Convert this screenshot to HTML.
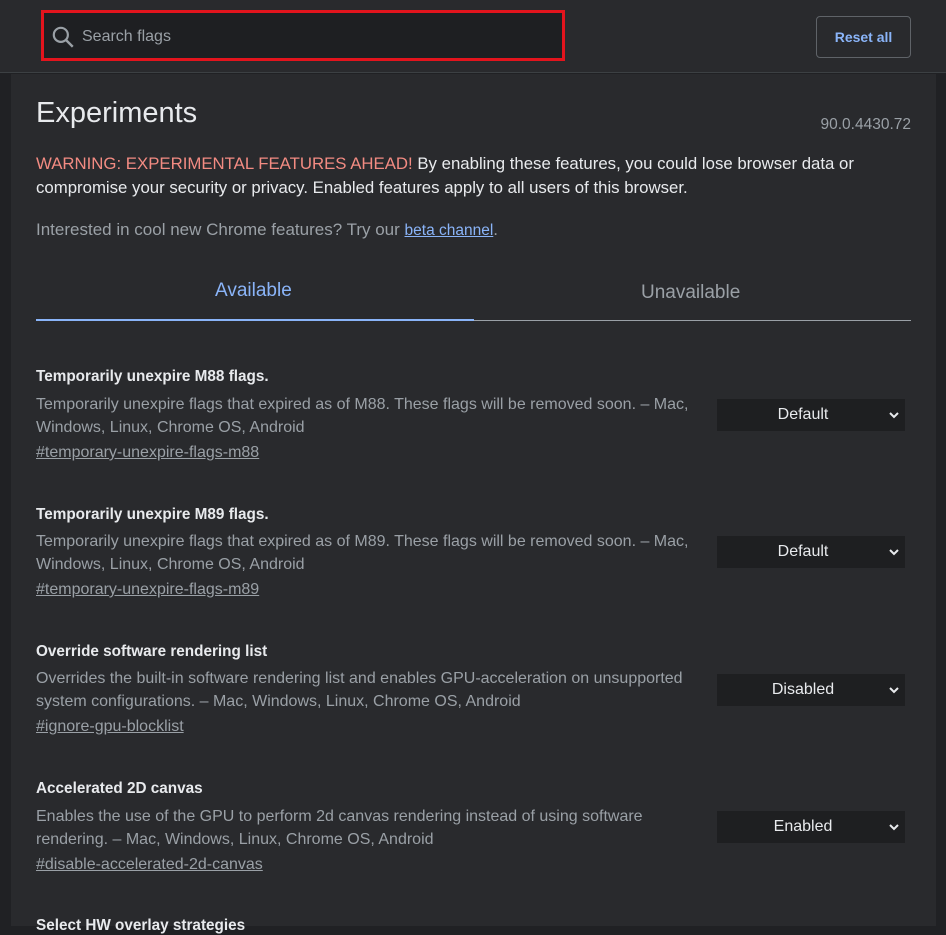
<!DOCTYPE html>
<html><head><style>
*{margin:0;padding:0;box-sizing:border-box}
body{width:946px;height:926px;overflow:hidden;background:#202124;font-family:"Liberation Sans",sans-serif;position:relative;color:#e8eaed}
.hdr{position:absolute;left:0;top:0;width:946px;height:73px;background:#292a2d;border-bottom:1px solid #3c4043}
.search{position:absolute;left:41px;top:10px;width:524px;height:51px;background:#1e1f22;border:3px solid #e3141d}
.search span{position:absolute;left:38px;top:15px;font-size:16px;color:#9aa0a6}
.reset{position:absolute;left:816px;top:16px;width:95px;height:42px;border:1px solid #5f6368;border-radius:4px;color:#8ab4f8;font-size:14px;font-weight:bold;text-align:center;line-height:40px}
.panel{position:absolute;left:11px;top:74px;width:925px;height:852px;background:#292a2d}
.a{position:absolute;white-space:nowrap}
.t{font-size:15.3px;font-weight:bold;color:#e8eaed}
.d{font-size:16px;color:#9aa0a6;line-height:23px}
.l{font-size:16px;color:#9aa0a6;text-decoration:underline}
.sel{position:absolute;left:717px;width:188px;height:32px;background:#1e1f21;color:#e8eaed;font-size:16px;text-align:center;line-height:32px;padding-right:16px}
.sel svg{position:absolute;right:6px;top:12px}
</style></head><body>
<div class="hdr">
<div class="search"><svg width="26" height="26" viewBox="0 0 24 24" style="position:absolute;left:6px;top:11px"><circle cx="10" cy="10" r="6.5" stroke="#9aa0a6" stroke-width="2" fill="none"/><path d="M15 15l6 6" stroke="#9aa0a6" stroke-width="2.2"/></svg><span>Search flags</span></div>
<div class="reset">Reset all</div>
</div>
<div class="panel"></div>
<div class="a" style="left:36px;top:97px;font-size:29px;color:#e8eaed">Experiments</div>
<div class="a" style="right:35px;top:116px;font-size:15.5px;color:#9aa0a6">90.0.4430.72</div>
<div class="a" style="left:36px;top:152px;font-size:16.8px;line-height:24px;color:#e8eaed"><span style="color:#f28b82">WARNING: EXPERIMENTAL FEATURES AHEAD!</span> By enabling these features, you could lose browser data or<br>compromise your security or privacy. Enabled features apply to all users of this browser.</div>
<div class="a" style="left:36px;top:220px;font-size:17px;color:#9aa0a6">Interested in cool new Chrome features? Try our <span style="color:#8ab4f8;text-decoration:underline;font-size:15.5px">beta channel</span>.</div>
<div class="a" style="left:215px;top:280px;font-size:19px;color:#8ab4f8">Available</div>
<div class="a" style="left:641px;top:282px;font-size:19px;color:#9aa0a6">Unavailable</div>
<div class="a" style="left:36px;top:320px;width:875px;height:1px;background:#9aa0a6"></div>
<div class="a" style="left:36px;top:319px;width:438px;height:2px;background:#8ab4f8"></div>

<div class="a t" style="left:36px;top:368px">Temporarily unexpire M88 flags.</div>
<div class="a d" style="left:36px;top:393px">Temporarily unexpire flags that expired as of M88. These flags will be removed soon. – Mac,<br>Windows, Linux, Chrome OS, Android</div>
<div class="a l" style="left:36px;top:444px">#temporary-unexpire-flags-m88</div>
<div class="sel" style="top:399px">Default<svg width="10" height="8" viewBox="0 0 10 8"><path d="M1 2l4 4 4-4" stroke="#e8eaed" stroke-width="2" fill="none"/></svg></div>

<div class="a t" style="left:36px;top:506px">Temporarily unexpire M89 flags.</div>
<div class="a d" style="left:36px;top:530px">Temporarily unexpire flags that expired as of M89. These flags will be removed soon. – Mac,<br>Windows, Linux, Chrome OS, Android</div>
<div class="a l" style="left:36px;top:581px">#temporary-unexpire-flags-m89</div>
<div class="sel" style="top:536px">Default<svg width="10" height="8" viewBox="0 0 10 8"><path d="M1 2l4 4 4-4" stroke="#e8eaed" stroke-width="2" fill="none"/></svg></div>

<div class="a t" style="left:36px;top:643px">Override software rendering list</div>
<div class="a d" style="left:36px;top:667px">Overrides the built-in software rendering list and enables GPU-acceleration on unsupported<br>system configurations. – Mac, Windows, Linux, Chrome OS, Android</div>
<div class="a l" style="left:36px;top:718px">#ignore-gpu-blocklist</div>
<div class="sel" style="top:674px">Disabled<svg width="10" height="8" viewBox="0 0 10 8"><path d="M1 2l4 4 4-4" stroke="#e8eaed" stroke-width="2" fill="none"/></svg></div>

<div class="a t" style="left:36px;top:780px">Accelerated 2D canvas</div>
<div class="a d" style="left:36px;top:805px">Enables the use of the GPU to perform 2d canvas rendering instead of using software<br>rendering. – Mac, Windows, Linux, Chrome OS, Android</div>
<div class="a l" style="left:36px;top:856px">#disable-accelerated-2d-canvas</div>
<div class="sel" style="top:811px">Enabled<svg width="10" height="8" viewBox="0 0 10 8"><path d="M1 2l4 4 4-4" stroke="#e8eaed" stroke-width="2" fill="none"/></svg></div>

<div class="a t" style="left:36px;top:917px">Select HW overlay strategies</div>
</body></html>
